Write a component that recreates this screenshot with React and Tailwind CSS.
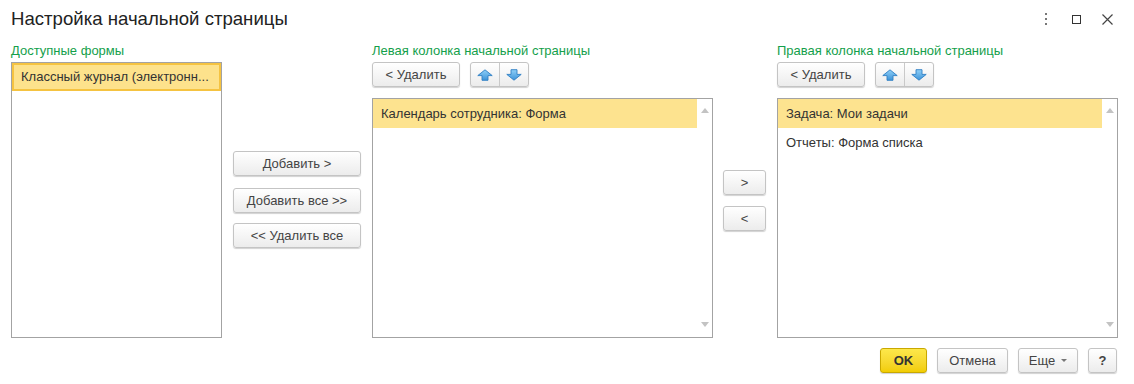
import React from "react";

const btn =
  "flex items-center justify-center h-[25px] rounded-[3px] border border-[#c4c4c4] bg-gradient-to-b from-white to-[#ececec] shadow-[0_1px_1px_rgba(0,0,0,0.18)] text-[13px] text-[#444] leading-none";

function Arrow({ down }) {
  return (
    <svg width="16" height="12" viewBox="0 0 16 12" style={down ? { transform: "rotate(180deg)" } : undefined}>
      <defs>
        <linearGradient id={down ? "gd" : "gu"} x1="0" y1="0" x2="0" y2="1">
          <stop offset="0" stopColor={down ? "#3d93d8" : "#8fd0f8"} />
          <stop offset="1" stopColor={down ? "#8fd0f8" : "#3d93d8"} />
        </linearGradient>
      </defs>
      <polygon
        points="8,0.8 15.2,6.6 11,6.6 11,11.3 5,11.3 5,6.6 0.8,6.6"
        fill={`url(#${down ? "gd" : "gu"})`}
        stroke="#2f7fc4"
        strokeWidth="0.9"
        strokeLinejoin="round"
      />
    </svg>
  );
}

function Toolbar() {
  return (
    <div className="flex h-[25px] gap-[10px]">
      <button className={`${btn} w-[88px]`}>&lt; Удалить</button>
      <div className="flex h-[25px] w-[59px] rounded-[3px] border border-[#c4c4c4] bg-gradient-to-b from-white to-[#ececec] shadow-[0_1px_1px_rgba(0,0,0,0.18)]">
        <div className="flex flex-1 items-center justify-center border-r border-[#c9c9c9]">
          <Arrow />
        </div>
        <div className="flex flex-1 items-center justify-center">
          <Arrow down />
        </div>
      </div>
    </div>
  );
}

function ScrollTri({ down }) {
  return (
    <svg width="8" height="5" viewBox="0 0 8 5">
      <polygon points={down ? "0,0 8,0 4,5" : "4,0 8,5 0,5"} fill="#c3c3c3" />
    </svg>
  );
}

function ListBox({ items }) {
  return (
    <div className="flex h-[240px] w-[341px] border border-[#a3a3a3] bg-white">
      <div className="flex flex-1 flex-col">
        {items.map((t, i) => (
          <div
            key={t}
            className={`flex h-[29px] items-center pl-[8px] text-[13px] text-[#333] ${i === 0 ? "bg-[#fde38f]" : ""}`}
          >
            {t}
          </div>
        ))}
      </div>
      <div className="flex w-[15px] flex-col items-center justify-between pt-[9px] pb-[10px]">
        <ScrollTri />
        <ScrollTri down />
      </div>
    </div>
  );
}

const label = "h-[16px] text-[13px] leading-[16px] text-[#14a04b]";

export default function App() {
  return (
    <div className="h-[384px] w-[1134px] overflow-hidden bg-white font-['Liberation_Sans',Arial,sans-serif]">
      {/* header */}
      <div className="flex h-[43px] items-start justify-between pl-[11px] pr-[11px]">
        <div className="pt-[7px] text-[18.6px] leading-[24px] text-[#222]">Настройка начальной страницы</div>
        <div className="flex items-center gap-[0px] pt-[13px]">
          <div className="flex h-[12px] w-[31px] flex-col items-center justify-between">
            <span className="block h-[2px] w-[2px] bg-[#777]" />
            <span className="block h-[2px] w-[2px] bg-[#777]" />
            <span className="block h-[2px] w-[2px] bg-[#777]" />
          </div>
          <div className="flex w-[31px] justify-center">
            <span className="block h-[9px] w-[9px] border-[1.5px] border-[#333]" />
          </div>
          <div className="flex w-[31px] justify-center">
            <svg width="11" height="11" viewBox="0 0 11 11">
              <path d="M0.5 0.5 L10.5 10.5 M10.5 0.5 L0.5 10.5" stroke="#444" strokeWidth="1.2" />
            </svg>
          </div>
        </div>
      </div>

      {/* main */}
      <div className="flex h-[295px] items-start pl-[11px]">
        {/* col 1 */}
        <div className="flex w-[211px] flex-col">
          <div className={label}>Доступные формы</div>
          <div className="mt-[3px] h-[276px] border border-[#a3a3a3] bg-white">
            <div className="flex h-[28px] items-center border-2 border-[#f5c341] bg-[#fde28c] pl-[7px] text-[13px] text-[#333]">
              Классный журнал (электронн...
            </div>
          </div>
        </div>

        {/* mid buttons */}
        <div className="ml-[11px] flex w-[128px] flex-col pt-[108px]">
          <button className={`${btn} w-[128px]`}>Добавить &gt;</button>
          <button className={`${btn} mt-[12px] w-[128px]`}>Добавить все &gt;&gt;</button>
          <button className={`${btn} mt-[10px] w-[128px]`}>&lt;&lt; Удалить все</button>
        </div>

        {/* col 2 */}
        <div className="ml-[11px] flex flex-col">
          <div className={label}>Левая колонка начальной страницы</div>
          <div className="mt-[3px]">
            <Toolbar />
          </div>
          <div className="mt-[11px]">
            <ListBox items={["Календарь сотрудника: Форма"]} />
          </div>
        </div>

        {/* move buttons */}
        <div className="ml-[10px] flex w-[43px] flex-col pt-[127px]">
          <button className={`${btn} w-[43px]`}>&gt;</button>
          <button className={`${btn} mt-[11px] w-[43px]`}>&lt;</button>
        </div>

        {/* col 3 */}
        <div className="ml-[11px] flex flex-col">
          <div className={label}>Правая колонка начальной страницы</div>
          <div className="mt-[3px]">
            <Toolbar />
          </div>
          <div className="mt-[11px]">
            <ListBox items={["Задача: Мои задачи", "Отчеты: Форма списка"]} />
          </div>
        </div>
      </div>

      {/* footer */}
      <div className="mt-[10px] flex justify-end gap-[10px] pr-[17px]">
        <button className="flex h-[25px] w-[47px] items-center justify-center rounded-[3px] border border-[#c9a800] bg-gradient-to-b from-[#fde84a] to-[#f2cd00] text-[13px] font-bold text-[#333] shadow-[0_1px_1px_rgba(0,0,0,0.18)]">
          OK
        </button>
        <button className={`${btn} w-[71px]`}>Отмена</button>
        <button className={`${btn} w-[60px] gap-[6px]`}>
          <span>Еще</span>
          <svg width="6" height="3" viewBox="0 0 6 3">
            <polygon points="0,0 6,0 3,3" fill="#777" />
          </svg>
        </button>
        <button className={`${btn} w-[29px] font-bold`}>?</button>
      </div>
    </div>
  );
}
